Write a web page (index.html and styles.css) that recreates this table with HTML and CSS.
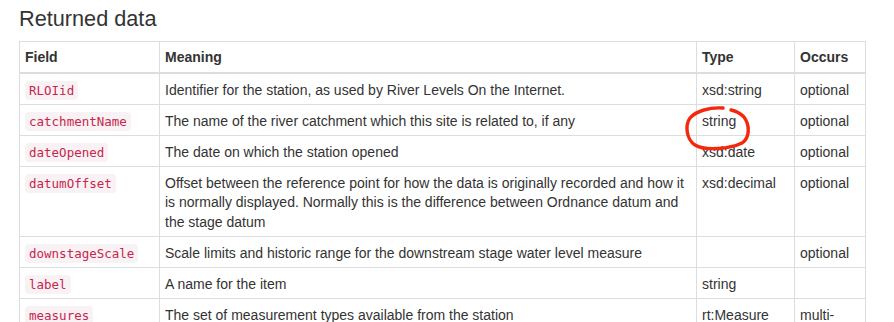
FILE: index.html
```html
<!DOCTYPE html>
<html>
<head>
<meta charset="utf-8">
<link rel="stylesheet" href="styles.css">
</head>
<body>
<div class="page">
  <h2 class="title">Returned data</h2>
  <table class="data">
    <colgroup>
      <col class="c-field">
      <col class="c-meaning">
      <col class="c-type">
      <col class="c-occurs">
    </colgroup>
    <thead>
      <tr><th>Field</th><th>Meaning</th><th>Type</th><th>Occurs</th></tr>
    </thead>
    <tbody>
      <tr><td><code>RLOIid</code></td><td>Identifier for the station, as used by River Levels On the Internet.</td><td>xsd:string</td><td>optional</td></tr>
      <tr><td><code>catchmentName</code></td><td>The name of the river catchment which this site is related to, if any</td><td>string</td><td>optional</td></tr>
      <tr><td><code>dateOpened</code></td><td>The date on which the station opened</td><td>xsd:date</td><td>optional</td></tr>
      <tr><td><code>datumOffset</code></td><td>Offset between the reference point for how the data is originally recorded and how it is normally displayed. Normally this is the difference between Ordnance datum and the stage datum</td><td>xsd:decimal</td><td>optional</td></tr>
      <tr><td><code>downstageScale</code></td><td>Scale limits and historic range for the downstream stage water level measure</td><td></td><td>optional</td></tr>
      <tr><td><code>label</code></td><td>A name for the item</td><td>string</td><td></td></tr>
      <tr><td><code>measures</code></td><td>The set of measurement types available from the station</td><td>rt:Measure</td><td>multi-valued</td></tr>
    </tbody>
  </table>
  <svg class="scribble" width="80" height="50" viewBox="0 0 80 50">
    <path d="M43 5 C30 4 16 8 10 15 C5 22 6 36 15 42 C25 48 50 46 62 40 C70 35 70 22 64 14 C60 10 56 8 51 7" fill="none" stroke="#f4290c" stroke-width="3.4" stroke-linecap="round"/>
  </svg>
</div>
</body>
</html>
```
FILE: styles.css
```css
html, body {
  margin: 0;
  padding: 0;
  background: #fff;
}
.page {
  position: relative;
  padding: 0 29px 0 19px;
  font-family: "Liberation Sans", Arial, sans-serif;
  font-size: 14px;
  color: #333;
}
.title {
  font-size: 21.7px;
  font-weight: 500;
  line-height: 24px;
  margin: 7px 0 10px 0;
  color: #333;
}
.data {
  width: 846px;
  border-collapse: collapse;
  table-layout: fixed;
  border: 1px solid #ddd;
}
.c-field { width: 140px; }
.c-meaning { width: 537px; }
.c-type { width: 98px; }
.c-occurs { width: 71px; }
.data th, .data td {
  border: 1px solid #ddd;
  padding: 6.5px 5px 4px;
  line-height: 19.5px;
  text-align: left;
  vertical-align: top;
}
.data th {
  font-weight: bold;
  padding: 6px 5px 4.5px;
  border-bottom: 2px solid #ddd;
}
.data td:last-child {
  word-break: break-word;
}
code {
  font-family: "DejaVu Sans Mono", Menlo, monospace;
  font-size: 12.5px;
  line-height: 1;
  color: #c7254e;
  background: #f9f2f4;
  padding: 2px 4px;
  border-radius: 4px;
}
.scribble {
  position: absolute;
  left: 680px;
  top: 96px;
}
```
